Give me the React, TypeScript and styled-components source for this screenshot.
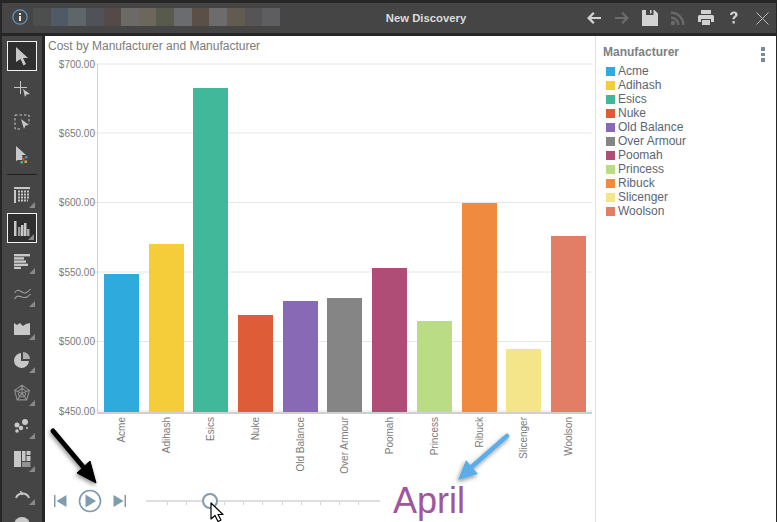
import React from "react";
import styled, { createGlobalStyle } from "styled-components";

const GlobalStyle = createGlobalStyle`
  html, body { margin: 0; padding: 0; background: #262626; }
  body { font-family: "Liberation Sans", Arial, sans-serif; }
`;

const manufacturers = [
  { name: "Acme", color: "#2eaadc", top: 274, x: 104 },
  { name: "Adihash", color: "#f5cd3b", top: 244, x: 149 },
  { name: "Esics", color: "#41b89a", top: 88, x: 193 },
  { name: "Nuke", color: "#de5d38", top: 315, x: 238 },
  { name: "Old Balance", color: "#8769b5", top: 301, x: 283 },
  { name: "Over Armour", color: "#858585", top: 298, x: 327 },
  { name: "Poomah", color: "#b04d76", top: 268, x: 372 },
  { name: "Princess", color: "#b9dc85", top: 321, x: 417 },
  { name: "Ribuck", color: "#ef8a3f", top: 203, x: 462 },
  { name: "Slicenger", color: "#f5e58a", top: 349, x: 506 },
  { name: "Woolson", color: "#e27d66", top: 236, x: 551 },
];

const ticks = [
  { label: "$700.00", y: 64 },
  { label: "$650.00", y: 133 },
  { label: "$600.00", y: 202.5 },
  { label: "$550.00", y: 272 },
  { label: "$500.00", y: 341.5 },
  { label: "$450.00", y: 411 },
];

const blurTiles = [
  "#4c4f4e", "#4f5a66", "#5f666a", "#50525a", "#544a48", "#6b6a66", "#6c675c",
  "#585a4e", "#6a6c70", "#5c4f48", "#6c6c6c", "#625c50", "#565456", "#5e5e60",
];

const Page = styled.div`
  position: relative;
  width: 777px;
  height: 522px;
  overflow: hidden;
  display: flex;
  flex-direction: column;
  padding: 3px 1px 0 2px;
  box-sizing: border-box;
  background: #262626;
`;

const TitleBar = styled.header`
  flex: none;
  height: 30px;
  display: flex;
  align-items: center;
  padding: 0 7px 0 10px;
  background: #454545;
`;

const InfoIcon = styled.svg`
  flex: none;
  margin-bottom: 2px;
`;

const BlurredName = styled.div`
  display: flex;
  margin: 0 0 2px 5px;
  width: 247px;
  height: 18px;
`;

const BlurTile = styled.span<{ $color: string }>`
  flex: 1;
  background: ${(p) => p.$color};
`;

const WindowTitle = styled.div`
  width: 292px;
  text-align: center;
  color: #dcdcdc;
  font-size: 11.3px;
  font-weight: bold;
`;

const TitleActions = styled.div`
  display: flex;
  align-items: center;
  margin-left: auto;
  gap: 12px;
`;

const Body = styled.div`
  flex: 1;
  display: flex;
  min-height: 0;
  margin-top: 3px;
`;

const Sidebar = styled.nav`
  flex: none;
  width: 40px;
  margin-right: 3px;
  background: #454545;
  display: flex;
  flex-direction: column;
  align-items: center;
  padding-top: 5px;
  box-sizing: border-box;
  overflow: hidden;
`;

const Tool = styled.div<{ $active?: boolean; $menu?: boolean }>`
  position: relative;
  flex: none;
  width: 30px;
  height: 30px;
  margin-bottom: 3px;
  display: flex;
  align-items: center;
  justify-content: center;
  box-sizing: border-box;
  color: #c8c8c8;
  ${(p) => p.$active && "border: 1.5px solid #f2f2f2; background: #2f2f2f;"}

  &::after {
    content: "";
    display: ${(p) => (p.$menu ? "block" : "none")};
    position: absolute;
    right: 2px;
    bottom: 2px;
    border-style: solid;
    border-width: 0 0 6px 6px;
    border-color: transparent transparent #8a8a8a transparent;
  }
`;

const ToolDivider = styled.div`
  flex: none;
  width: 30px;
  height: 1px;
  margin: 1px 0 5px;
  background: #1f1f1f;
`;

const Content = styled.main`
  flex: 1;
  display: flex;
  min-width: 0;
  background: #fff;
`;

const ChartPane = styled.section`
  flex: none;
  width: 550px;
  display: flex;
  flex-direction: column;
`;

const ChartTitle = styled.div`
  flex: none;
  height: 20px;
  line-height: 20px;
  padding-left: 3px;
  font-size: 12px;
  color: #7b7b7b;
`;

const ChartSvg = styled.svg`
  flex: none;
  display: block;
`;

const Timeline = styled.div`
  flex: 1;
  display: flex;
  align-items: center;
  padding: 0 0 0 9px;
  min-height: 0;
`;

const PlayerButtons = styled.div`
  display: flex;
  align-items: center;
  gap: 11px;
`;

const Slider = styled.div`
  position: relative;
  flex: none;
  width: 234px;
  height: 2px;
  margin-left: 20px;
  background: #dedede;
`;

const SliderTicks = styled.div`
  position: absolute;
  left: 0;
  right: 0;
  top: 2px;
  display: flex;
  justify-content: space-between;
  padding: 0 21px;
`;

const SliderTick = styled.span`
  width: 1px;
  height: 3px;
  background: #d4d4d4;
`;

const SliderThumb = styled.div<{ $left: number }>`
  position: absolute;
  left: ${(p) => p.$left}px;
  top: -7px;
  width: 16px;
  height: 16px;
  box-sizing: border-box;
  border: 2px solid #7f9bb0;
  border-radius: 50%;
  background: #fff;
`;

const Period = styled.div`
  margin-left: 13px;
  font-size: 36px;
  line-height: 40px;
  color: #a0559f;
`;

const Legend = styled.aside`
  flex: 1;
  position: relative;
  border-left: 1px solid #e2e2e2;
  padding: 9px 0 0 7px;
  box-sizing: border-box;
`;

const LegendTitle = styled.div`
  font-size: 12px;
  line-height: 14px;
  font-weight: bold;
  color: #7d7f85;
  margin-bottom: 5px;
`;

const LegendRow = styled.div`
  display: flex;
  align-items: center;
  height: 14px;
  padding-left: 3px;
  font-size: 12px;
  color: #5c6673;
`;

const Swatch = styled.span<{ $color: string }>`
  width: 9px;
  height: 9px;
  margin-right: 3px;
  background: ${(p) => p.$color};
`;

const MenuDots = styled.div`
  position: absolute;
  top: 11px;
  right: 11px;
  display: flex;
  flex-direction: column;
  gap: 2px;
`;

const MenuDot = styled.span`
  width: 4px;
  height: 3.7px;
  background: #7b8b9b;
`;

const Annotations = styled.svg`
  position: absolute;
  left: 0;
  top: 0;
  pointer-events: none;
`;

const Ico = ({ w = 20, h = 20, children }: { w?: number; h?: number; children: React.ReactNode }) => (
  <svg width={w} height={h} viewBox={`0 0 ${w} ${h}`} fill="currentColor">
    {children}
  </svg>
);

const BarIcon = styled.span<{ $dim?: boolean; $shift?: number }>`
  display: flex;
  margin-left: ${(p) => p.$shift ?? 0}px;
  color: ${(p) => (p.$dim ? "#6b6b6b" : "#d2d2d2")};
`;

const offsetX = 45;
const offsetY = 56;

export default function App() {
  return (
    <>
      <GlobalStyle />
      <Page>
        <TitleBar>
          <InfoIcon width="16" height="16" viewBox="0 0 16 16">
            <circle cx="8" cy="8" r="7.2" fill="none" stroke="#5f9cc8" strokeWidth="1.2" />
            <rect x="7" y="7" width="2" height="5" fill="#e6e6e6" />
            <rect x="7" y="4" width="2" height="2" fill="#e6e6e6" />
          </InfoIcon>
          <BlurredName>
            {blurTiles.map((c, i) => (
              <BlurTile key={i} $color={c} />
            ))}
          </BlurredName>
          <WindowTitle>New Discovery</WindowTitle>
          <TitleActions>
            <BarIcon>
              <Ico w={16} h={16}>
                <path d="M1 8l6-6 1.6 1.6L5.3 6.9H15v2.2H5.3l3.3 3.3L7 14z" />
              </Ico>
            </BarIcon>
            <BarIcon $dim>
              <Ico w={16} h={16}>
                <path d="M15 8L9 2 7.4 3.600l3.3 3.300H1v2.200h9.700l-3.300 3.300L9 14z" />
              </Ico>
            </BarIcon>
            <BarIcon>
              <Ico w={16} h={16}>
                <path d="M0 0h12.500L16 3.500V16H0zM4 0v5h7.500V0H9.500v3.500H8V0z" fillRule="evenodd" />
              </Ico>
            </BarIcon>
            <BarIcon $dim>
              <Ico w={16} h={16}>
                <circle cx="3" cy="13" r="2.2" />
                <path d="M1 6.500v2.300A6.200 6.200 0 0 1 7.200 15h2.300A8.500 8.500 0 0 0 1 6.500z" />
                <path d="M1 1.500v2.300A11.200 11.200 0 0 1 12.200 15h2.300A13.500 13.500 0 0 0 1 1.500z" />
              </Ico>
            </BarIcon>
            <BarIcon>
              <Ico w={16} h={16}>
                <path d="M3 0h10v4H3zM1.500 5h13A1.500 1.500 0 0 1 16 6.500V12h-3V9H3v3H0V6.500A1.500 1.500 0 0 1 1.500 5zM4 10h8v5H4z" />
              </Ico>
            </BarIcon>
            <BarIcon>
              <Ico w={15} h={16}>
                <path d="M4 5c0-2.200 1.600-3.500 3.800-3.500 2.300 0 3.800 1.200 3.800 3 0 1.500-.8 2.200-1.800 2.900-.8.6-1.100.9-1.100 1.800H6.500c0-1.600.5-2.200 1.500-3 .8-.6 1.200-1 1.200-1.600 0-.7-.6-1.100-1.400-1.100-.9 0-1.500.5-1.500 1.500zM6.500 11h2.300v2.400H6.500z" />
              </Ico>
            </BarIcon>
            <BarIcon $shift={3}>
              <svg width="13" height="13" viewBox="0 0 13 13" stroke="#bdbdbd" strokeWidth="1">
                <path d="M0.5 0.500l12 12M12.500 0.500l-12 12" />
              </svg>
            </BarIcon>
          </TitleActions>
        </TitleBar>
        <Body>
          <Sidebar>
            <Tool $active>
              <Ico w={14} h={20}>
                <path d="M1 1l12 11H8l3 6-2.500 1.500L5.500 13 1 16z" />
              </Ico>
            </Tool>
            <Tool>
              <Ico w={16} h={18}>
                <path d="M6 1h1v6h6v1H7v6H6V8H0V7h6z" />
                <path d="M9 9l7 5-3.500.5L11 17z" />
              </Ico>
            </Tool>
            <Tool>
              <Ico w={16} h={16}>
                <path
                  d="M1 1h14v9M6 15H1V1"
                  fill="none"
                  stroke="currentColor"
                  strokeDasharray="2.500 2"
                />
                <path d="M7 5l8 6-3.500.5L10 15z" />
              </Ico>
            </Tool>
            <Tool>
              <Ico w={16} h={20}>
                <path d="M2 1l10 9H8l1 5H4l-2 1z" />
                <rect x="8" y="13" width="2.500" height="2.500" fill="#d8483a" />
                <rect x="11" y="11" width="2.500" height="2.500" fill="#3c9ad0" />
                <rect x="6.500" y="16" width="2.500" height="2.500" fill="#3cb890" />
                <rect x="10.500" y="15.500" width="2.500" height="2.500" fill="#e8a24a" />
              </Ico>
            </Tool>
            <ToolDivider />
            <Tool $menu>
              <Ico w={16} h={16}>
                <rect x="0" y="0" width="16" height="2" />
                <rect x="0" y="3" width="2" height="13" />
                <path
                  d="M4 4.500h12M4 7.500h12M4 10.500h12M4 13.500h10"
                  stroke="currentColor"
                  strokeWidth="2"
                  strokeDasharray="2 1"
                />
              </Ico>
            </Tool>
            <Tool $active $menu>
              <Ico w={17} h={17}>
                <rect x="0" y="1" width="2.500" height="15" />
                <rect x="4" y="7" width="2.500" height="9" opacity="0.7" />
                <rect x="7" y="5" width="2.500" height="11" />
                <rect x="10" y="3" width="2.500" height="13" />
                <rect x="13" y="9" width="2.500" height="7" opacity="0.8" />
              </Ico>
            </Tool>
            <Tool $menu>
              <Ico w={16} h={16}>
                <rect x="0" y="1" width="16" height="2.400" />
                <rect x="0" y="4.200" width="10" height="2.400" />
                <rect x="0" y="7.400" width="12" height="2.400" />
                <rect x="0" y="10.600" width="14" height="2.400" />
                <rect x="0" y="13.800" width="7" height="2.200" />
              </Ico>
            </Tool>
            <Tool $menu>
              <svg width="17" height="14" viewBox="0 0 17 14" fill="none" stroke="#a0a0a0" strokeWidth="1.1">
                <path d="M0.500 6C3 2 5 3 8 5s5 1 8.500-3" />
                <path d="M0.500 12C3 8 5 9 8 10s5 1 8.500-3" />
              </svg>
            </Tool>
            <Tool $menu>
              <Ico w={16} h={16}>
                <path d="M0 4l3 2 3-2 3 3 3-2 4-1v12H0z" />
              </Ico>
            </Tool>
            <Tool $menu>
              <Ico w={16} h={16}>
                <path d="M7 1v8h8A7.500 7.500 0 1 1 7 1z" />
                <path d="M9 0a7 7 0 0 1 7 7H9z" opacity="0.8" />
              </Ico>
            </Tool>
            <Tool $menu>
              <svg width="18" height="18" viewBox="0 0 17 17" fill="none" stroke="#8f8f8f" strokeWidth="1">
                <path d="M8.500 1l7 5-2.500 9H4L1.500 6zM8.500 4l4 3-1.500 5H6L4.500 7zM8.500 1v8M1.500 6l7 3M15.500 6l-7 3M4 15l4.500-6M13 15L8.500 9" />
              </svg>
            </Tool>
            <Tool $menu>
              <Ico w={17} h={15}>
                <circle cx="3" cy="6" r="2.500" />
                <circle cx="11" cy="3" r="3" />
                <circle cx="7" cy="9" r="2.200" />
                <circle cx="3" cy="12" r="1.800" />
                <circle cx="13" cy="9" r="1" />
              </Ico>
            </Tool>
            <Tool $menu>
              <Ico w={17} h={16}>
                <rect x="0" y="0" width="7" height="16" />
                <rect x="8" y="0" width="3.500" height="10" />
                <rect x="12.500" y="0" width="4" height="4" />
                <rect x="12.500" y="5" width="4" height="5" />
                <rect x="8" y="11" width="8.500" height="5" opacity="0.6" />
              </Ico>
            </Tool>
            <Tool $menu>
              <svg width="17" height="13" viewBox="0 0 17 13" fill="none" stroke="#c8c8c8" strokeWidth="2">
                <path d="M2 12A7 7 0 0 1 15 12" />
                <path d="M8.500 9L6.500 5" strokeWidth="1.500" />
              </svg>
            </Tool>
            <Tool>
              <Ico w={16} h={16}>
                <circle cx="8" cy="8" r="8" />
              </Ico>
            </Tool>
          </Sidebar>
          <Content>
            <ChartPane>
              <ChartTitle>Cost by Manufacturer and Manufacturer</ChartTitle>
              <ChartSvg width="550" height="424" viewBox={`${offsetX} ${offsetY} 550 424`}>
                {ticks.map((t) => (
                  <g key={t.label}>
                    <line x1="92" x2="592" y1={t.y} y2={t.y} stroke="#e6e6e6" />
                    <text x="95" y={t.y + 3.5} textAnchor="end" fontSize="10" fill="#7b7b7b">
                      {t.label}
                    </text>
                  </g>
                ))}
                <line x1="97.500" x2="97.500" y1="64" y2="413" stroke="#d2d2d2" />
                {manufacturers.map((m) => (
                  <g key={m.name}>
                    <rect x={m.x} y={m.top} width="35" height={413 - m.top} fill={m.color} />
                    <text
                      transform={`translate(${m.x + 21} 417) rotate(-90)`}
                      textAnchor="end"
                      fontSize="10"
                      fill="#7b7b7b"
                    >
                      {m.name}
                    </text>
                  </g>
                ))}
                <line x1="97" x2="592" y1="413" y2="413" stroke="#cfcfcf" strokeWidth="2" />
              </ChartSvg>
              <Timeline>
                <PlayerButtons>
                  <svg width="13" height="14" viewBox="0 0 13 14" fill="#7f9bb0">
                    <rect x="0" y="1" width="1.500" height="12" />
                    <path d="M2.500 7L12.500 1v12z" />
                  </svg>
                  <svg width="24" height="24" viewBox="0 0 24 24" fill="#7f9bb0">
                    <circle cx="12" cy="12" r="10.500" fill="none" stroke="#7f9bb0" strokeWidth="1.600" />
                    <path d="M7.500 5.500L18 12 7.500 18.500z" />
                  </svg>
                  <svg width="13" height="14" viewBox="0 0 13 14" fill="#7f9bb0">
                    <rect x="11.500" y="1" width="1.500" height="12" />
                    <path d="M10.500 7L0.500 1v12z" />
                  </svg>
                </PlayerButtons>
                <Slider>
                  <SliderTicks>
                    {Array.from({ length: 11 }).map((_, i) => (
                      <SliderTick key={i} />
                    ))}
                  </SliderTicks>
                  <SliderThumb $left={56} />
                </Slider>
                <Period>April</Period>
              </Timeline>
            </ChartPane>
            <Legend>
              <LegendTitle>Manufacturer</LegendTitle>
              {manufacturers.map((m) => (
                <LegendRow key={m.name}>
                  <Swatch $color={m.color} />
                  {m.name}
                </LegendRow>
              ))}
              <MenuDots>
                <MenuDot />
                <MenuDot />
                <MenuDot />
              </MenuDots>
            </Legend>
          </Content>
        </Body>
        <Annotations width="777" height="522" viewBox="0 0 777 522">
          <defs>
            <filter id="arrowShadow" x="-30%" y="-30%" width="160%" height="160%">
              <feDropShadow dx="-1" dy="2" stdDeviation="2" floodColor="#000" floodOpacity="0.45" />
            </filter>
          </defs>
          <g filter="url(#arrowShadow)">
            <path d="M53 431L90 475" stroke="#000" strokeWidth="5" strokeLinecap="round" />
            <path d="M96 483L77 473 90 461z" fill="#000" stroke="#000" strokeWidth="1" />
          </g>
          <g filter="url(#arrowShadow)">
            <path d="M507 436L467 471" stroke="#5aade8" strokeWidth="4.500" strokeLinecap="round" />
            <path d="M458 480L466 460 478 474z" fill="#5aade8" />
          </g>
          <path
            d="M211 503v16l4-3.500 3 6 3-1.500-3-5.500h5z"
            fill="#fff"
            stroke="#000"
            strokeWidth="1.200"
            strokeLinejoin="round"
          />
        </Annotations>
      </Page>
    </>
  );
}
